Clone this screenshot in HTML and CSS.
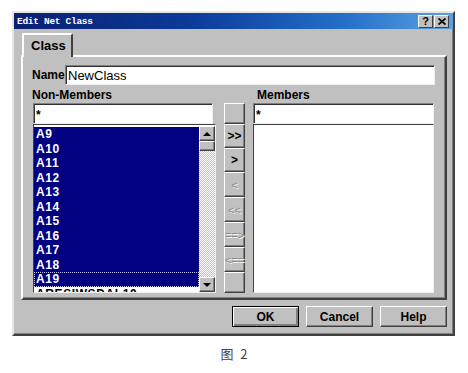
FILE: index.html
```html
<!DOCTYPE html>
<html lang="zh">
  <head>
    <meta charset="UTF-8" />
    <title>Edit Net Class</title>
    <link rel="stylesheet" href="styles.css">
  </head>
  <body>
    <div class="dialog">
      <div class="titlebar">
        <span class="title">Edit Net Class</span>
        <div class="title-btns">
          <span class="tbtn">?</span>
          <span class="tbtn">
            <svg width="8" height="7" viewBox="0 0 8 7"><path d="M0.5 0.5 L7.5 6.5 M7.5 0.5 L0.5 6.5" stroke="#000" stroke-width="1.8"/></svg>
          </span>
        </div>
      </div>

      <div class="dialog-body">
        <div class="tabs">
          <div class="tab">Class</div>
        </div>

        <div class="panel">
          <div class="name-row">
            <label for="name">Name</label>
            <input class="field name-field" id="name" type="text" value="NewClass" />
          </div>

          <div class="lists">
            <div class="col-label">Non-Members</div>
            <div class="col-label members-label">Members</div>

            <input class="field filter short" type="text" value="*" />
            <input class="field filter members-filter" type="text" value="*" />

            <div class="listbox">
              <ul class="items">
                <li class="sel">A9</li>
                <li class="sel">A10</li>
                <li class="sel">A11</li>
                <li class="sel">A12</li>
                <li class="sel">A13</li>
                <li class="sel">A14</li>
                <li class="sel">A15</li>
                <li class="sel">A16</li>
                <li class="sel">A17</li>
                <li class="sel">A18</li>
                <li class="sel focus">A19</li>
                <li>ARESIWSDAL10</li>
              </ul>
              <div class="scrollbar">
                <span class="sbtn"><span class="arrow up"></span></span>
                <span class="thumb"></span>
                <span class="track"></span>
                <span class="sbtn"><span class="arrow down"></span></span>
              </div>
            </div>

            <div class="movers">
              <button class="mbtn first"></button>
              <button class="mbtn">&gt;&gt;</button>
              <button class="mbtn">&gt;</button>
              <button class="mbtn off">&lt;</button>
              <button class="mbtn off">&lt;&lt;</button>
              <button class="mbtn off">==&gt;</button>
              <button class="mbtn off">&lt;==</button>
              <button class="mbtn last"></button>
            </div>

            <div class="listbox members"></div>
          </div>
        </div>

        <div class="actions">
          <button class="btn default">OK</button>
          <button class="btn">Cancel</button>
          <button class="btn">Help</button>
        </div>
      </div>
    </div>

    <p class="caption">图 2</p>
  </body>
</html>
```

FILE: styles.css
```css
* {
  margin: 0;
  padding: 0;
  box-sizing: border-box;
}
body {
  background: #fff;
  font-family: "Liberation Sans", Arial, sans-serif;
  font-size: 12px;
  color: #000;
}
.dialog {
  width: 443px;
  height: 325px;
  margin: 11px 0 0 12px;
  background: #c0c0c0;
  border: 2px solid;
  border-color: #e6e6e6 #404040 #404040 #e6e6e6;
  box-shadow: inset -1px -1px #808080;
}
.titlebar {
  height: 16px;
  display: flex;
  align-items: center;
  justify-content: space-between;
  padding: 0 4px 0 3px;
  background: linear-gradient(90deg, #0a1f72 0%, #0c3a98 40%, #2370c8 75%, #5aa0e2 100%);
}
.title {
  font-family: "Liberation Mono", monospace;
  font-size: 9.5px;
  font-weight: bold;
  color: #fff;
  letter-spacing: -0.3px;
}
.title-btns {
  display: flex;
  gap: 1px;
}
.tbtn {
  width: 15px;
  height: 13px;
  display: flex;
  align-items: center;
  justify-content: center;
  background: #c0c0c0;
  border: 1px solid;
  border-color: #fff #404040 #404040 #fff;
  font-size: 11px;
  font-weight: bold;
  line-height: 1;
}
.dialog-body {
  padding: 4px 6px 7px 7px;
}
.tabs {
  display: flex;
  height: 22px;
}
.tab {
  position: relative;
  z-index: 1;
  margin-left: 1px;
  width: 51px;
  height: 24px;
  margin-bottom: -2px;
  padding: 3px 0 0 7px;
  background: #c0c0c0;
  border: 2px solid;
  border-bottom: none;
  border-color: #fff #404040 #c0c0c0 #fff;
  border-radius: 2px 2px 0 0;
  font-size: 13px;
  font-weight: bold;
}
.panel {
  height: 245px;
  padding: 8px 10px 5px 9px;
  border: 2px solid;
  border-color: #fff #404040 #404040 #fff;
  box-shadow: inset -1px -1px #808080;
}
.name-row {
  display: flex;
  align-items: center;
  height: 20px;
}
.name-row label {
  font-weight: bold;
  width: 33px;
}
.field {
  font-family: "Liberation Sans", Arial, sans-serif;
  background: #fff;
  border: 1px solid;
  border-color: #808080 #f0f0f0 #f0f0f0 #808080;
  box-shadow: inset 1px 1px #303030;
  padding: 0 2px;
  outline: none;
}
.name-field {
  flex: 1;
  height: 20px;
  font-size: 13px;
}
.lists {
  margin-top: 2px;
  padding-left: 1px;
  display: grid;
  grid-template-columns: 183px 21px 181px;
  grid-template-rows: 16px 21px 169px;
  column-gap: 8px;
}
.col-label {
  grid-column: 1;
  grid-row: 1;
  font-weight: bold;
  margin-left: -1px;
  line-height: 16px;
}
.members-label {
  grid-column: 3;
  margin-left: 4px;
}
.filter {
  grid-row: 2;
  height: 21px;
  font-size: 12px;
  font-weight: bold;
  padding-top: 2px;
  line-height: 1;
}
.short {
  grid-column: 1;
  width: 180px;
}
.members-filter {
  grid-column: 3;
  width: 181px;
}
.listbox {
  grid-column: 1;
  grid-row: 3;
  display: flex;
  background: #fff;
  border: 1px solid;
  border-color: #404040 #f0f0f0 #f0f0f0 #404040;
  overflow: hidden;
}
.items {
  flex: 1;
  list-style: none;
  padding-top: 2px;
  overflow: hidden;
}
.items li {
  height: 14.5px;
  line-height: 14.5px;
  padding-left: 2px;
  font-weight: bold;
  letter-spacing: 0.6px;
  color: #000;
  white-space: nowrap;
}
.items li.sel {
  background: #000080;
  color: #fff;
}
.items li.focus {
  outline: 1px dotted #c8c8ff;
  outline-offset: -1px;
}
.scrollbar {
  width: 16px;
  display: flex;
  flex-direction: column;
  padding-top: 1px;
}
.sbtn,
.thumb {
  display: flex;
  align-items: center;
  justify-content: center;
  background: #c0c0c0;
  border: 1px solid;
  border-color: #fff #404040 #404040 #fff;
  box-shadow: inset -1px -1px #808080;
}
.sbtn {
  height: 15px;
}
.thumb {
  height: 10px;
}
.track {
  flex: 1;
  background: repeating-conic-gradient(#c0c0c0 0 25%, #fff 0 50%) 0 0 / 2px 2px;
}
.arrow {
  width: 0;
  height: 0;
  border-left: 4px solid transparent;
  border-right: 4px solid transparent;
}
.arrow.up {
  border-bottom: 4px solid #000;
}
.arrow.down {
  border-top: 4px solid #000;
}
.movers {
  grid-column: 2;
  grid-row: 2 / 4;
  display: flex;
  flex-direction: column;
}
.mbtn {
  height: 25px;
  background: #c0c0c0;
  border: 1px solid;
  border-color: #fff #404040 #404040 #fff;
  box-shadow: inset -1px -1px #808080;
  font-family: "Liberation Sans", Arial, sans-serif;
  font-size: 12px;
  font-weight: bold;
  color: #000;
}
.mbtn:nth-child(2),
.mbtn:nth-child(3) {
  height: 24px;
}
.mbtn.first,
.mbtn.last {
  height: 21px;
}
.mbtn.off {
  color: #8a8a8a;
  font-size: 11px;
  font-weight: normal;
  text-shadow: 1px 1px #f4f4f4;
}
.members {
  grid-column: 3;
}
.actions {
  display: flex;
  justify-content: flex-end;
  gap: 7px;
  margin-top: 6px;
}
.btn {
  width: 67px;
  height: 21px;
  background: #c0c0c0;
  border: 1px solid;
  border-color: #fff #404040 #404040 #fff;
  box-shadow: inset -1px -1px #808080;
  font-family: "Liberation Sans", Arial, sans-serif;
  font-size: 12px;
  font-weight: bold;
  color: #000;
}
.btn.default {
  border: 1px solid #000;
  box-shadow: inset 1px 1px #fff, inset -2px -2px #808080;
}
.caption {
  margin-top: 10px;
  text-align: center;
  font-family: "Noto Sans CJK SC", sans-serif;
  font-size: 13px;
  word-spacing: 4px;
  color: #444;
  line-height: 16px;
}
```
